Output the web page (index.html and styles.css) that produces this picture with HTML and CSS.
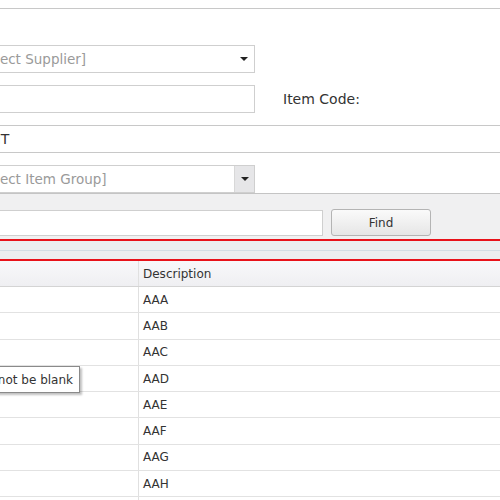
FILE: index.html
```html
<!DOCTYPE html>
<html>
<head>
<meta charset="utf-8">
<link rel="stylesheet" href="styles.css">
</head>
<body>
<div class="screen">
  <div class="form">
    <div class="field combo">
      <span class="placeholder">[Select Supplier]</span>
      <span class="arrow"></span>
    </div>
    <div class="code-row">
      <div class="field textbox"></div>
      <span class="label">Item Code:</span>
    </div>
    <div class="unit-row"><span class="unit-text">UNIT</span></div>
    <div class="field combo group">
      <span class="placeholder">[Select Item Group]</span>
      <span class="btn"><span class="arrow"></span></span>
    </div>
  </div>
  <div class="findbar">
    <div class="find-box"></div>
    <button class="find-btn">Find</button>
  </div>
  <div class="splitter"><div class="split-line"></div></div>
  <div class="grid">
    <div class="grid-row head"><div class="c1"></div><div class="c2">Description</div></div>
    <div class="grid-row"><div class="c1"></div><div class="c2">AAA</div></div>
    <div class="grid-row"><div class="c1"></div><div class="c2">AAB</div></div>
    <div class="grid-row"><div class="c1"></div><div class="c2">AAC</div></div>
    <div class="grid-row"><div class="c1"></div><div class="c2">AAD</div></div>
    <div class="grid-row"><div class="c1"></div><div class="c2">AAE</div></div>
    <div class="grid-row"><div class="c1"></div><div class="c2">AAF</div></div>
    <div class="grid-row"><div class="c1"></div><div class="c2">AAG</div></div>
    <div class="grid-row"><div class="c1"></div><div class="c2">AAH</div></div>
    <div class="grid-row"><div class="c1"></div><div class="c2">AAI</div></div>
  </div>
  <div class="tooltip">Item Code can not be blank</div>
</div>
</body>
</html>
```

FILE: styles.css
```css
html, body {
  margin: 0;
  padding: 0;
  background: #fff;
}
.screen {
  position: relative;
  width: 500px;
  height: 500px;
  overflow: hidden;
  font-family: "DejaVu Sans", sans-serif;
  color: #333;
}
.form {
  margin-top: 8px;
  border-top: 1px solid #c8c8c8;
  padding-top: 36px;
}
.field {
  box-sizing: border-box;
  margin-left: -31px;
  width: 286px;
  height: 28px;
  border: 1px solid #cfcfcf;
  background: #fff;
  display: flex;
  align-items: center;
}
.combo {
  font-size: 13.5px;
  color: #9a9a9a;
  padding-left: 4px;
}
.placeholder {
  flex: 1;
  white-space: nowrap;
}
.arrow {
  width: 0;
  height: 0;
  border-left: 4px solid transparent;
  border-right: 4px solid transparent;
  border-top: 4px solid #222;
  margin-right: 6px;
}
.code-row {
  display: flex;
  align-items: center;
  margin-top: 12px;
  gap: 28px;
}
.label {
  font-size: 14px;
  color: #333;
  white-space: nowrap;
}
.unit-row {
  box-sizing: border-box;
  margin-top: 12px;
  margin-left: -31px;
  height: 28px;
  border-top: 1px solid #c8c8c8;
  border-bottom: 1px solid #c8c8c8;
  display: flex;
  align-items: center;
  padding-left: 7px;
  font-size: 14px;
  color: #333;
}
.group {
  margin-top: 12px;
  height: 28px;
}
.group .btn {
  align-self: stretch;
  width: 19px;
  background: #e6e6e8;
  border-left: 1px solid #d8d8d8;
  display: flex;
  align-items: center;
  justify-content: center;
}
.group .btn .arrow {
  margin-right: 0;
}
.findbar {
  box-sizing: border-box;
  height: 46px;
  border-top: 1px solid #c4c4c4;
  background: #f0f0f1;
  display: flex;
  align-items: flex-start;
  padding-top: 15px;
  gap: 8px;
}
.find-box {
  box-sizing: border-box;
  margin-left: -31px;
  margin-top: 1px;
  width: 354px;
  height: 26px;
  background: #fff;
  border: 1px solid #cfcfcf;
}
.find-btn {
  box-sizing: border-box;
  width: 100px;
  height: 27px;
  border: 1px solid #b4b4b4;
  border-radius: 3px;
  background: linear-gradient(#fafafa, #e6e6e6);
  font-family: "DejaVu Sans", sans-serif;
  font-size: 12px;
  color: #333;
  padding: 0;
}
.splitter {
  height: 18px;
  border-top: 2px solid #e8121a;
  border-bottom: 2px solid #e8121a;
  background: #eceeef;
  display: flex;
  align-items: center;
}
.split-line {
  width: 100%;
  height: 1px;
  background: #d3dde4;
}
.grid {
  font-size: 12px;
  color: #333;
}
.grid-row {
  box-sizing: border-box;
  display: flex;
  height: 26.3px;
  border-bottom: 1px solid #e2e2e2;
}
.grid-row.head {
  height: 26px;
  background: linear-gradient(#f8f8fa, #efeff2);
  border-bottom: 1px solid #d4d4d4;
}
.c1 {
  width: 138px;
  border-right: 1px solid #e0e0e0;
}
.c2 {
  flex: 1;
  display: flex;
  align-items: center;
  padding-left: 4px;
}
.tooltip {
  position: absolute;
  right: 420px;
  top: 366px;
  box-sizing: border-box;
  height: 27px;
  padding: 0 6px 0 8px;
  display: flex;
  align-items: center;
  white-space: nowrap;
  font-size: 12px;
  color: #333;
  background: #fff;
  border: 1px solid #8a8a8a;
  box-shadow: 2px 2px 2px rgba(0,0,0,0.25);
}
```
